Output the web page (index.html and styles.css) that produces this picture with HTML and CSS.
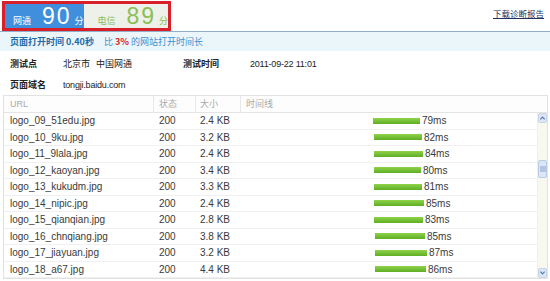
FILE: index.html
```html
<!DOCTYPE html>
<html lang="zh">
<head>
<meta charset="utf-8">
<link rel="stylesheet" href="styles.css">
</head>
<body>
<div class="page">
  <div class="top">
    <div class="tabs">
      <div class="tab tab-cnc"><span class="isp">网通</span><span class="score">90</span><span class="unit">分</span></div>
      <div class="tab tab-tel"><span class="isp">电信</span><span class="score">89</span><span class="unit">分</span></div>
    </div>
    <a class="download" href="#">下载诊断报告</a>
  </div>
  <div class="band">
    <span class="load">页面打开时间 0.40秒</span>
    <span class="compare">比 <em>3%</em> 的网站打开时间长</span>
  </div>
  <div class="info">
    <div class="info-row">
      <span class="label">测试点</span><span class="val v1">北京市&nbsp;&nbsp;&nbsp;中国网通</span>
      <span class="label l2">测试时间</span><span class="val">2011-09-22 11:01</span>
    </div>
    <div class="info-row">
      <span class="label">页面域名</span><span class="val">tongji.baidu.com</span>
    </div>
  </div>
  <div class="table">
    <div class="thead">
      <div class="c c-url">URL</div>
      <div class="c c-st">状态</div>
      <div class="c c-sz">大小</div>
      <div class="c c-tl">时间线</div>
    </div>
    <div class="tbody">
      <div class="rows">
        <div class="row"><div class="c c-url">logo_09_51edu.jpg</div><div class="c c-st">200</div><div class="c c-sz">2.4 KB</div><div class="c c-tl"><span class="bar" style="margin-left:132px;width:47px"></span><span class="ms">79ms</span></div></div>
        <div class="row"><div class="c c-url">logo_10_9ku.jpg</div><div class="c c-st">200</div><div class="c c-sz">3.2 KB</div><div class="c c-tl"><span class="bar" style="margin-left:133px;width:48px"></span><span class="ms">82ms</span></div></div>
        <div class="row"><div class="c c-url">logo_11_9lala.jpg</div><div class="c c-st">200</div><div class="c c-sz">2.4 KB</div><div class="c c-tl"><span class="bar" style="margin-left:133px;width:49px"></span><span class="ms">84ms</span></div></div>
        <div class="row"><div class="c c-url">logo_12_kaoyan.jpg</div><div class="c c-st">200</div><div class="c c-sz">3.4 KB</div><div class="c c-tl"><span class="bar" style="margin-left:133px;width:47px"></span><span class="ms">80ms</span></div></div>
        <div class="row"><div class="c c-url">logo_13_kukudm.jpg</div><div class="c c-st">200</div><div class="c c-sz">3.3 KB</div><div class="c c-tl"><span class="bar" style="margin-left:133px;width:48px"></span><span class="ms">81ms</span></div></div>
        <div class="row"><div class="c c-url">logo_14_nipic.jpg</div><div class="c c-st">200</div><div class="c c-sz">2.4 KB</div><div class="c c-tl"><span class="bar" style="margin-left:133px;width:50px"></span><span class="ms">85ms</span></div></div>
        <div class="row"><div class="c c-url">logo_15_qianqian.jpg</div><div class="c c-st">200</div><div class="c c-sz">2.8 KB</div><div class="c c-tl"><span class="bar" style="margin-left:133px;width:49px"></span><span class="ms">83ms</span></div></div>
        <div class="row"><div class="c c-url">logo_16_chnqiang.jpg</div><div class="c c-st">200</div><div class="c c-sz">3.8 KB</div><div class="c c-tl"><span class="bar" style="margin-left:134px;width:50px"></span><span class="ms">85ms</span></div></div>
        <div class="row"><div class="c c-url">logo_17_jiayuan.jpg</div><div class="c c-st">200</div><div class="c c-sz">3.2 KB</div><div class="c c-tl"><span class="bar" style="margin-left:134px;width:52px"></span><span class="ms">87ms</span></div></div>
        <div class="row"><div class="c c-url">logo_18_a67.jpg</div><div class="c c-st">200</div><div class="c c-sz">4.4 KB</div><div class="c c-tl"><span class="bar" style="margin-left:134px;width:51px"></span><span class="ms">86ms</span></div></div>
      </div>
      <div class="scroll">
        <div class="sbtn"><svg width="8" height="8" viewBox="0 0 8 8"><path d="M1.5 5.5 L4 3 L6.5 5.5" fill="none" stroke="#5b7bb0" stroke-width="1.4"/></svg></div>
        <div class="track"><div class="thumb"><svg width="6" height="6" viewBox="0 0 6 6"><path d="M0 1H6M0 3H6M0 5H6" stroke="#8aa3cc" stroke-width="1"/></svg></div></div>
        <div class="sbtn"><svg width="8" height="8" viewBox="0 0 8 8"><path d="M1.5 2.5 L4 5 L6.5 2.5" fill="none" stroke="#5b7bb0" stroke-width="1.4"/></svg></div>
      </div>
    </div>
  </div>
</div>
</body>
</html>
```

FILE: styles.css
```css
* { box-sizing: border-box; }
html, body { margin: 0; padding: 0; background: #fff; }
body {
  width: 550px;
  height: 281px;
  overflow: hidden;
  font-family: "Liberation Sans", "Noto Sans CJK SC", sans-serif;
  font-size: 10px;
  color: #333;
}
.page { width: 550px; }

.top {
  display: flex;
  justify-content: space-between;
  align-items: flex-start;
  height: 31px;
  padding: 1px 6px 0 2px;
}
.tabs {
  display: flex;
  border: 3px solid #d9202a;
  height: 30px;
  width: 169px;
}
.tab {
  flex: 1;
  display: flex;
  align-items: baseline;
  padding-left: 8px;
  line-height: 24px;
  white-space: nowrap;
  overflow: hidden;
}
.tab-cnc { background: #3f8fdc; color: #fff; }
.tab-tel { background: #eef0ea; color: #8cbf55; padding-left: 14px; }
.isp { font-family: "Noto Sans CJK SC", sans-serif; font-size: 9px; margin-right: 11px; flex: none; }
.score { font-family: "Liberation Sans", sans-serif; font-weight: 400; font-size: 23px; letter-spacing: 2px; margin-right: 3px; flex: none; }
.unit { font-family: "Noto Sans CJK SC", sans-serif; font-size: 9px; flex: none; }
.download {
  margin-top: 6px;
  font-family: "Noto Sans CJK SC", sans-serif;
  font-size: 8.5px;
  color: #203060;
  text-decoration: underline;
}

.band {
  height: 20px;
  border-top: 1px solid #8fb0c8;
  background: #eaf6fa;
  display: flex;
  align-items: center;
  padding-left: 10px;
  font-family: "Noto Sans CJK SC", sans-serif;
  font-size: 9px;
  line-height: 12px;
}
.load { color: #1f6aa8; font-weight: bold; margin-right: 10px; }
.compare { color: #3f8fcf; }
.compare em { font-style: normal; color: #d9202a; font-weight: bold; }

.info { padding: 2px 0 0 10px; }
.info-row {
  display: flex;
  align-items: center;
  height: 21px;
}
.label {
  width: 53px;
  font-family: "Noto Sans CJK SC", sans-serif;
  font-weight: bold;
  font-size: 9px;
  color: #222;
}
.val { color: #222; font-size: 9px; letter-spacing: -0.2px; font-family: "Liberation Sans", "Noto Sans CJK SC", sans-serif; }
.v1 { width: 120px; font-family: "Noto Sans CJK SC", sans-serif; letter-spacing: 0; }
.l2 { width: 67px; }

.table {
  margin: 0 2px 0 3px;
  border: 1px solid #e2e2e2;
}
.thead {
  display: flex;
  height: 17px;
  align-items: center;
  background: #fdfdfd;
  border-bottom: 1px solid #e4e4e4;
  color: #aaa;
  font-family: "Liberation Sans", "Noto Sans CJK SC", sans-serif;
  font-size: 9px;
}
.thead .c { height: 17px; line-height: 17px; border-right: 1px solid #e8e8e8; }
.thead .c-tl { border-right: none; }
.c-url { width: 150px; padding-left: 6px; }
.c-st { width: 42px; padding-left: 5px; }
.c-sz { width: 45px; padding-left: 4px; }
.c-tl { flex: 1; padding-left: 5px; display: flex; align-items: center; }
.row .c-tl { padding-left: 0; }

.tbody { display: flex; }
.rows { flex: 1; }
.row {
  display: flex;
  align-items: center;
  height: 16.5px;
  border-bottom: 1px solid #f0f0f0;
  font-size: 10px;
  color: #3a3a3a;
}
.bar {
  display: inline-block;
  height: 6px;
  background: linear-gradient(#8fd34a, #5fae24);
}
.ms { margin-left: 2px; }

.scroll {
  width: 10px;
  background: #f8f8ee;
  display: flex;
  flex-direction: column;
  border-left: 1px solid #f0f0e4;
}
.sbtn {
  height: 10px;
  background: #dbe6f6;
  border: 1px solid #c7d5ea;
  border-radius: 2px;
  display: flex;
  align-items: center;
  justify-content: center;
}
.track { flex: 1; padding-top: 37px; }
.thumb {
  height: 18px;
  background: #dbe6f6;
  border: 1px solid #b8cbe6;
  border-radius: 2px;
  display: flex;
  align-items: center;
  justify-content: center;
}
```
